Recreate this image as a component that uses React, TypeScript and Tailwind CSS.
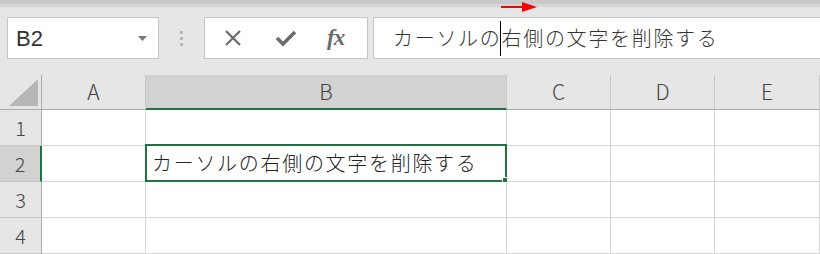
import React from 'react';

const text = 'カーソルの右側の文字を削除する';
const jp = "font-['Noto_Sans_CJK_JP','Noto_Sans',sans-serif] font-light";

const cols = ['A', 'B', 'C', 'D', 'E'];

const App = () => {
  return (
    <div className="relative w-[820px] h-[254px] overflow-hidden bg-[#e6e6e6] font-['Liberation_Sans',sans-serif]">
      {/* ribbon edge */}
      <div className="h-[4px] bg-[#cacaca]" />
      <div className="h-[3px] bg-[#d6d6d6]" />
      <svg className="absolute left-[501px] top-[2px]" width="36" height="10" viewBox="0 0 36 10">
        <path d="M0 5 H24" stroke="#ff0000" strokeWidth="2" />
        <path d="M21 0 L36 5 L21 10 Z" fill="#ff0000" />
      </svg>

      {/* formula bar row */}
      <div className="flex items-stretch h-[42px] mt-[10px] pl-[7px]">
        <div className="w-[152px] bg-white border border-[#c6c6c6] flex items-center justify-between pl-[8px] pr-[11px]">
          <span className="text-[22px] text-[#333]">B2</span>
          <svg width="9" height="5" viewBox="0 0 9 5"><path d="M0 0 H9 L4.5 5 Z" fill="#777" /></svg>
        </div>
        <div className="w-[45px] flex flex-col items-center justify-center gap-[3px]">
          <span className="w-[3px] h-[3px] bg-[#b8b8b8]" />
          <span className="w-[3px] h-[3px] bg-[#b8b8b8]" />
          <span className="w-[3px] h-[3px] bg-[#b8b8b8]" />
        </div>
        <div className="w-[164px] bg-white border border-[#c6c6c6] flex items-center pl-[18px]">
          <svg width="20" height="20" viewBox="0 0 20 20">
            <path d="M3 3 L17 17 M17 3 L3 17" stroke="#6b6b6b" strokeWidth="2.2" />
          </svg>
          <svg className="ml-[32px]" width="22" height="20" viewBox="0 0 22 20">
            <path d="M2 10 L8 16 L20 4" stroke="#6b6b6b" strokeWidth="3.6" fill="none" />
          </svg>
          <span className="ml-[30px] text-[23px] italic font-semibold text-[#6b6b6b] font-['Liberation_Serif',serif] tracking-[-1px]">fx</span>
        </div>
        <div className={`flex-1 ml-[5px] bg-white border border-r-0 border-[#c6c6c6] flex items-center pl-[19px] text-[20px] tracking-[1.7px] text-[#333] ${jp}`}>
          <span>{text.slice(0, 5)}</span>
          <span className="inline-block w-px h-[35px] bg-black -ml-[1.5px] mr-[0.5px]" />
          <span>{text.slice(5)}</span>
        </div>
      </div>

      {/* sheet */}
      <div className="mt-[16px] grid grid-cols-[42px_104px_361px_104px_104px_1fr] grid-rows-[35px_36px_36px_36px_36px] text-[#444]">
        <div className="relative bg-[#e6e6e6] border-r border-b border-[#ababab]">
          <svg className="absolute right-[3px] bottom-[3px]" width="29" height="27" viewBox="0 0 29 27">
            <path d="M29 0 V27 H0 Z" fill="#b7b7b7" />
          </svg>
        </div>
        {cols.map(c => (
          <div
            key={c}
            className={`flex items-center justify-center text-[21px] ${jp} border-r border-[#c8c8c8] ${
              c === 'B' ? 'bg-[#d2d2d2] border-b-2 border-b-[#217346]' : 'bg-[#e6e6e6] border-b border-b-[#ababab]'
            }`}
          >
            {c}
          </div>
        ))}
        {[1, 2, 3, 4].map(r => (
          <React.Fragment key={r}>
            <div
              className={`flex items-center justify-center text-[20px] ${jp} border-b border-[#c8c8c8] ${
                r === 2 ? 'bg-[#d2d2d2] border-r-2 border-r-[#217346]' : 'bg-[#e6e6e6] border-r border-r-[#ababab]'
              }`}
            >
              {r}
            </div>
            {cols.map(c => (
              <div key={c} className="relative bg-white border-r border-b border-[#d4d4d4]">
                {r === 2 && c === 'B' && (
                  <>
                    <div className={`absolute -left-[1px] -top-[2px] -right-[1px] -bottom-[1px] border-2 border-[#217346] flex items-center pl-[5px] text-[20px] tracking-[1.7px] text-[#222] whitespace-nowrap ${jp}`}>
                      {text}
                    </div>
                    <div className="absolute -right-[3px] -bottom-[3px] w-[6px] h-[6px] bg-[#217346] outline outline-1 outline-white" />
                  </>
                )}
              </div>
            ))}
          </React.Fragment>
        ))}
      </div>
    </div>
  );
};

export default App;
